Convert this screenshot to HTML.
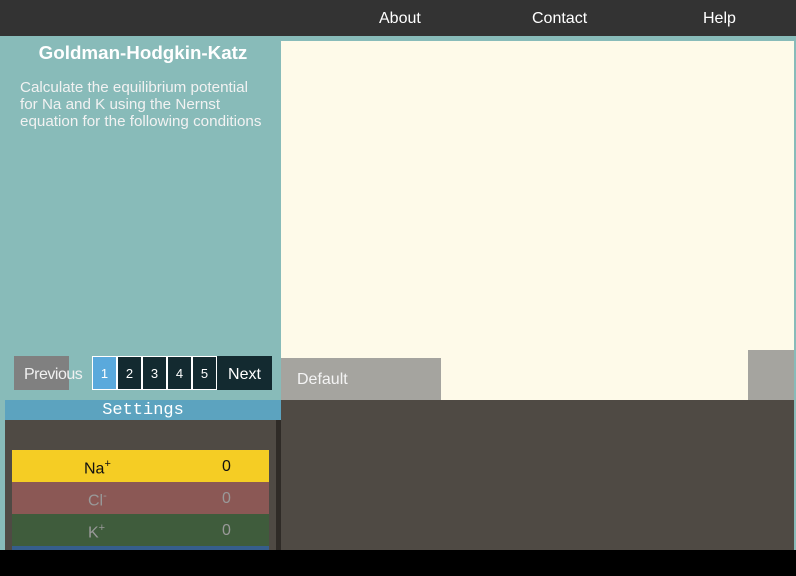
<!DOCTYPE html>
<html><head><meta charset="utf-8"><style>
*{margin:0;padding:0;box-sizing:border-box}
body{width:796px;height:576px;overflow:hidden;background:#88bbb9;font-family:"Liberation Sans",sans-serif;position:relative}
.a{position:absolute}
.nav{left:0;top:0;width:796px;height:36px;background:#333}
.nav span{position:absolute;top:10px;color:#fff;font-size:16px}
.pg{top:356px;width:25px;height:34px;background:#132a30;color:#fff;font-size:13px;text-align:center;line-height:34px;border:1px solid #fff}
</style></head><body>
<div class="a nav"><span style="left:379px">About</span><span style="left:532px">Contact</span><span style="left:703px">Help</span></div>
<div class="a" style="left:0;top:42px;width:286px;text-align:center;color:#fff;font-weight:bold;font-size:18.8px">Goldman-Hodgkin-Katz</div>
<div class="a" style="left:20px;top:79px;width:247px;color:#f2f2f2;font-size:15.2px;line-height:17px">Calculate the equilibrium potential for Na and K using the Nernst equation for the following conditions</div>
<div class="a" style="left:281px;top:41px;width:513px;height:359px;background:#fefae9"></div>
<div class="a" style="left:281px;top:358px;width:160px;height:42px;background:#a5a49f;color:#f4f4f4;font-size:16px;padding:13px 0 0 16px">Default</div>
<div class="a" style="left:748px;top:350px;width:46px;height:50px;background:#a5a49f"></div>
<div class="a" style="left:14px;top:356px;width:55px;height:34px;background:#808080"></div>
<div class="a" style="left:24px;top:366px;color:#f0f0f0;font-size:16px;letter-spacing:-0.5px;line-height:18px">Previous</div>
<div class="a pg" style="left:92px;background:#5aa9dc">1</div>
<div class="a pg" style="left:117px">2</div>
<div class="a pg" style="left:142px">3</div>
<div class="a pg" style="left:167px">4</div>
<div class="a pg" style="left:192px">5</div>
<div class="a" style="left:217px;top:356px;width:55px;height:34px;background:#132a30;color:#fff;font-size:16px;text-align:center;line-height:38px">Next</div>
<div class="a" style="left:5px;top:400px;width:276px;height:20px;background:#5ca3bf"></div>
<div class="a" style="left:5px;top:399px;width:276px;color:#fff;font-family:'Liberation Mono',monospace;font-size:17px;text-align:center;line-height:24px">Settings</div>
<div class="a" style="left:5px;top:420px;width:276px;height:130px;background:#4f4a44"></div>
<div class="a" style="left:276px;top:420px;width:5px;height:130px;background:#2f2b27"></div>
<div class="a" style="left:281px;top:400px;width:513px;height:150px;background:#4f4a44"></div>
<div class="a" style="left:12px;top:450px;width:257px;height:32px;background:#f5cd24"></div>
<div class="a" style="left:84px;top:458px;font-size:16px;color:#111">Na<sup style="font-size:11px">+</sup></div>
<div class="a" style="left:222px;top:458px;font-size:16px;color:#111">0</div>
<div class="a" style="left:12px;top:482px;width:257px;height:32px;background:#8b5855"></div>
<div class="a" style="left:88px;top:490px;font-size:16px;color:#999">Cl<sup style="font-size:11px">-</sup></div>
<div class="a" style="left:222px;top:490px;font-size:16px;color:#999">0</div>
<div class="a" style="left:12px;top:514px;width:257px;height:32px;background:#3f5c3c"></div>
<div class="a" style="left:88px;top:522px;font-size:16px;color:#999">K<sup style="font-size:11px">+</sup></div>
<div class="a" style="left:222px;top:522px;font-size:16px;color:#999">0</div>
<div class="a" style="left:12px;top:546px;width:257px;height:4px;background:#365e8c"></div>
<div class="a" style="left:0;top:550px;width:796px;height:26px;background:#000"></div>
</body></html>
